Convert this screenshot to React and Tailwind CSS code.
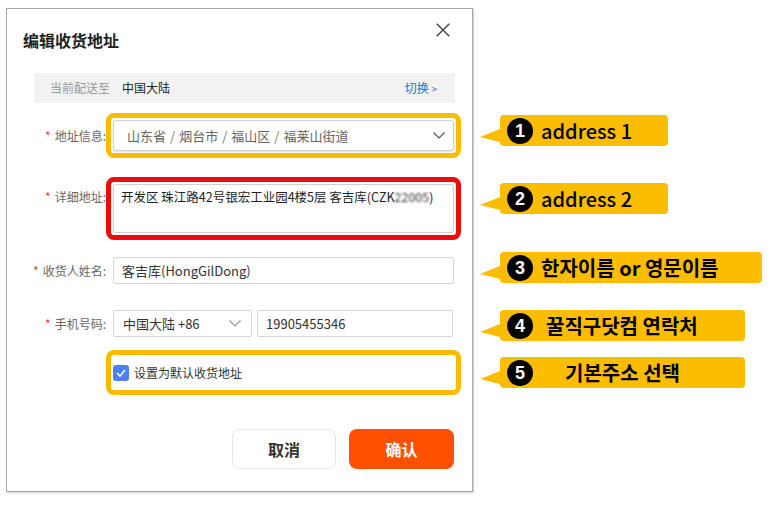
import React from "react";

const cjk = { fontFamily: '"Noto Sans CJK SC", "Noto Sans", sans-serif' };
const kr = { fontFamily: '"Noto Sans CJK KR", "Noto Sans", sans-serif' };

function Label({ children, extra = "" }) {
  return (
    <div className={"w-[99px] shrink-0 text-right text-[12px] leading-[20px] text-[#666] " + extra}>
      <span className="text-[#f33] mr-[4px]">*</span>
      {children}
    </div>
  );
}

function Chevron({ cls = "", color = "#555" }) {
  return (
    <svg className={cls} width="12" height="7" viewBox="0 0 12 7" fill="none">
      <path d="M0.5 0.5 L6 6 L11.5 0.5" stroke={color} strokeWidth="1.2" />
    </svg>
  );
}

function Callout({ n, children, boxW, mt, gap, weight }) {
  return (
    <div className={"flex " + mt}>
      <svg width="20" height="31" viewBox="0 0 20 31" className="shrink-0">
        <polygon points="0,22 20,14 20,27" fill="#fcbc00" />
      </svg>
      <div className={"h-[31px] bg-[#fcbc00] rounded-[4px] flex items-center pl-[7px] " + boxW}>
        <div className="w-[26px] h-[26px] rounded-full bg-black text-white flex items-center justify-center text-[18px] font-bold leading-none" style={{ fontFamily: '"Liberation Sans", Arial, sans-serif' }}>
          {n}
        </div>
        <div className={"text-[20px] leading-[26px] text-black whitespace-nowrap " + gap + " " + weight} style={kr}>
          {children}
        </div>
      </div>
    </div>
  );
}

export default function App() {
  return (
    <div className="w-[768px] h-[505px] bg-white flex items-start overflow-hidden" style={cjk}>
      <div className="ml-[6px] mt-[8px] w-[467px] h-[484px] shrink-0 border border-[#a8a8a8] bg-white shadow-[1px_1px_2px_rgba(0,0,0,0.2)] flex flex-col">
        {/* header */}
        <div className="h-[64px] flex justify-between items-start pl-[16px] pr-[22px]">
          <div className="mt-[20px] text-[16px] leading-[22px] font-bold text-[#222]">编辑收货地址</div>
          <svg className="mt-[14px]" width="14" height="14" viewBox="0 0 14 14" fill="none">
            <path d="M0.7 0.7 L13.3 13.3 M13.3 0.7 L0.7 13.3" stroke="#444" strokeWidth="1.4" />
          </svg>
        </div>

        {/* current destination */}
        <div className="ml-[27px] mr-[17px] h-[30px] bg-[#f2f2f2] flex items-center pl-[16px] pr-[18px] text-[12px]">
          <span className="text-[#999]">当前配送至</span>
          <span className="ml-[12px] text-[#222]">中国大陆</span>
          <span className="ml-auto text-[#2a6fd0]">切换 <span className="text-[10px]">&gt;</span></span>
        </div>

        {/* form */}
        <div className="mt-[10px] flex flex-col">
          {/* row 1 */}
          <div className="flex items-center">
            <Label>地址信息:</Label>
            <div className="w-[355px] border-[5px] border-[#fbbc00] rounded-[8px] p-[2px]">
              <div className="h-[31px] border border-[#cfcfcf] rounded-[3px] bg-white shadow-[0_1px_2px_rgba(0,0,0,0.12)] flex items-center pl-[13px] pr-[8px] text-[13px] text-[#666]">
                <span>山东省</span>
                <span className="mx-[4px] text-[#777]">/</span>
                <span>烟台市</span>
                <span className="mx-[4px] text-[#777]">/</span>
                <span>福山区</span>
                <span className="mx-[4px] text-[#777]">/</span>
                <span>福莱山街道</span>
                <Chevron cls="ml-auto" color="#555" />
              </div>
            </div>
          </div>

          {/* row 2 */}
          <div className="flex items-start mt-[19px]">
            <Label extra="mt-[10px]">详细地址:</Label>
            <div className="w-[355px] border-[5px] border-[#ec0c0c] rounded-[8px] p-[2px]">
              <div className="h-[49px] border border-[#cfcfcf] rounded-[3px] bg-white pt-[2px] pl-[7px] text-[12.5px] leading-[20px] text-[#222] whitespace-nowrap">
                开发区 珠江路42号银宏工业园4楼5层 客吉库(CZK<span className="blur-[0.8px] text-[#333]">22005</span>)
              </div>
            </div>
          </div>

          {/* row 3 */}
          <div className="flex items-center mt-[10px]">
            <Label>收货人姓名:</Label>
            <div className="w-[355px] border-[5px] border-transparent p-[2px]">
              <div className="h-[27px] border border-[#d5d5d5] rounded-[2px] bg-white flex items-center pl-[8px] text-[13px] text-[#333]">
                客吉库(HongGilDong)
              </div>
            </div>
          </div>

          {/* row 4 */}
          <div className="flex items-center mt-[12px]">
            <Label>手机号码:</Label>
            <div className="w-[355px] border-[5px] border-transparent p-[2px] flex gap-[5px]">
              <div className="w-[139px] h-[27px] border border-[#d5d5d5] rounded-[2px] bg-white flex items-center pl-[9px] pr-[10px] text-[13px] text-[#333]">
                中国大陆 +86
                <Chevron cls="ml-auto" color="#999" />
              </div>
              <div className="w-[196px] h-[27px] border border-[#d5d5d5] rounded-[2px] bg-white flex items-center pl-[8px] text-[13px] text-[#333]">
                19905455346
              </div>
            </div>
          </div>

          {/* row 5 */}
          <div className="flex items-center mt-[6px]">
            <div className="w-[99px] shrink-0" />
            <div className="w-[355px] border-[5px] border-[#fbbc00] rounded-[8px] p-[2px]">
              <div className="h-[31px] flex items-center">
                <div className="w-[16px] h-[16px] rounded-[3px] bg-[#4d7ff2] flex items-center justify-center">
                  <svg width="10" height="8" viewBox="0 0 10 8" fill="none">
                    <path d="M1 4 L4 7 L9 1" stroke="white" strokeWidth="1.6" />
                  </svg>
                </div>
                <span className="ml-[5px] text-[12px] text-[#333]">设置为默认收货地址</span>
              </div>
            </div>
          </div>

          {/* buttons */}
          <div className="mt-[34px] flex justify-end gap-[13px] pr-[18px]">
            <div className="w-[104px] h-[40px] border border-[#e5e5e5] rounded-[8px] flex items-center justify-center text-[16px] font-bold text-[#333]">
              取消
            </div>
            <div className="w-[105px] h-[40px] bg-[#ff5000] rounded-[8px] flex items-center justify-center text-[16px] font-bold text-white">
              确认
            </div>
          </div>
        </div>
      </div>

      {/* callouts */}
      <div className="ml-[7px] mt-[115px] flex flex-col">
        <Callout n="1" boxW="w-[168px]" mt="" gap="ml-[8px]" weight="font-medium">address 1</Callout>
        <Callout n="2" boxW="w-[168px]" mt="mt-[37px]" gap="ml-[8px]" weight="font-medium">address 2</Callout>
        <Callout n="3" boxW="w-[262px]" mt="mt-[38px]" gap="ml-[8px]" weight="font-bold">한자이름 or 영문이름</Callout>
        <Callout n="4" boxW="w-[245px]" mt="mt-[27px]" gap="ml-[13px]" weight="font-bold">꿀직구닷컴 연락처</Callout>
        <Callout n="5" boxW="w-[245px]" mt="mt-[16px]" gap="ml-[32px]" weight="font-bold">기본주소 선택</Callout>
      </div>
    </div>
  );
}
